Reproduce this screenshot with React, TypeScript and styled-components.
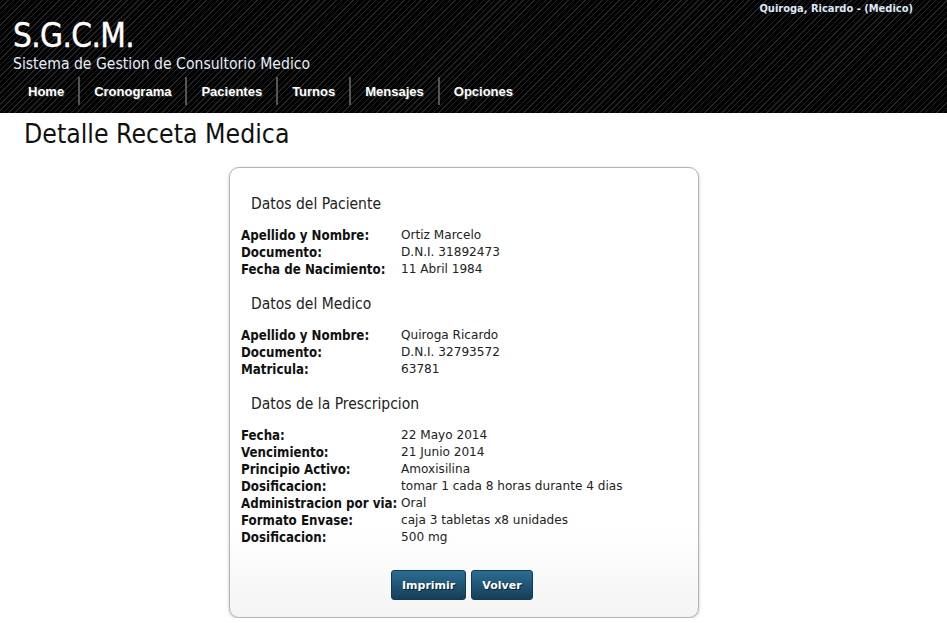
import React from "react";
import styled, { createGlobalStyle } from "styled-components";

const Global = createGlobalStyle`
  html, body { margin: 0; padding: 0; background: #fff; }
  body { font-family: "DejaVu Sans", Verdana, sans-serif; color: #222; }
`;

const Header = styled.header`
  height: 113px;
  background-color: #000;
  background-image: repeating-linear-gradient(-45deg, #000 0 3px, #242424 3px 4px);
  color: #fff;
  position: relative;
  display: flex;
  flex-direction: column;
  padding: 18px 0 0 13px;
  box-sizing: border-box;
`;

const UserName = styled.div`
  position: absolute;
  top: 2px;
  right: 34px;
  font-family: "DejaVu Sans Condensed", "DejaVu Sans", sans-serif;
  font-weight: bold;
  font-size: 11px;
  color: #dce8f6;
`;

const Logo = styled.div`
  font-family: "DejaVu Sans Condensed", "DejaVu Sans", Verdana, sans-serif;
  font-size: 33px;
  line-height: 36px;
  letter-spacing: -0.6px;
  -webkit-text-stroke: 0.4px #fff;
`;

const Subtitle = styled.div`
  font-family: "DejaVu Sans Condensed", "DejaVu Sans", sans-serif;
  font-size: 15.6px;
  line-height: 20px;
  color: #e6eefa;
`;

const Nav = styled.nav`
  display: flex;
  margin: 3px 0 0 1px;
  height: 28px;
`;

const NavItem = styled.a<{ $last?: boolean }>`
  display: flex;
  align-items: center;
  padding: 0 14px;
  font-family: "Liberation Sans", Arial, sans-serif;
  font-weight: bold;
  font-size: 13px;
  color: #fff;
  text-shadow: 1px 1px 0 #333;
  border-right: ${(p) => (p.$last ? "none" : "2px solid #555")};
  cursor: pointer;
`;

const PageTitle = styled.h1`
  margin: 6px 0 0 24px;
  font-family: "DejaVu Sans Condensed", "DejaVu Sans", sans-serif;
  font-weight: normal;
  font-size: 26.4px;
  line-height: 30px;
  color: #111;
`;

const Main = styled.main`
  display: flex;
  justify-content: flex-start;
  padding: 0 0 0 229px;
  margin-top: 18px;
`;

const Card = styled.section`
  width: 470px;
  box-sizing: border-box;
  border: 1px solid #b4b4b4;
  border-radius: 10px;
  background: linear-gradient(#fff 80%, #f4f4f4);
  box-shadow: 0 1px 3px rgba(0, 0, 0, 0.25);
  padding: 10px 11px 17px;
`;

const Heading = styled.h2`
  margin: 16px 0 13px 10px;
  font-family: "DejaVu Sans Condensed", "DejaVu Sans", sans-serif;
  font-weight: normal;
  font-size: 15.5px;
  line-height: 20px;
  color: #222;
`;

const Row = styled.div`
  display: grid;
  grid-template-columns: 160px 1fr;
  height: 17px;
  line-height: 17px;
  font-size: 12.1px;
  white-space: nowrap;
`;

const Label = styled.span`
  font-family: "DejaVu Sans Condensed", "DejaVu Sans", sans-serif;
  font-weight: bold;
  font-size: 13.2px;
  color: #111;
`;

const Value = styled.span`
  color: #222;
`;

const Buttons = styled.div`
  display: flex;
  gap: 5px;
  margin: 24px 0 0 150px;
`;

const Button = styled.button`
  height: 30px;
  padding: 0 10px;
  border: 1px solid #123a55;
  border-radius: 3px;
  background: linear-gradient(#2b6d92, #163e58);
  color: #fff;
  font-family: "DejaVu Sans", Verdana, sans-serif;
  font-weight: bold;
  font-size: 11px;
  text-shadow: 1px 1px 0 #0b2233;
  cursor: pointer;
`;

type Pair = [string, string];

const sections: { title: string; rows: Pair[] }[] = [
  {
    title: "Datos del Paciente",
    rows: [
      ["Apellido y Nombre:", "Ortiz Marcelo"],
      ["Documento:", "D.N.I. 31892473"],
      ["Fecha de Nacimiento:", "11 Abril 1984"],
    ],
  },
  {
    title: "Datos del Medico",
    rows: [
      ["Apellido y Nombre:", "Quiroga Ricardo"],
      ["Documento:", "D.N.I. 32793572"],
      ["Matricula:", "63781"],
    ],
  },
  {
    title: "Datos de la Prescripcion",
    rows: [
      ["Fecha:", "22 Mayo 2014"],
      ["Vencimiento:", "21 Junio 2014"],
      ["Principio Activo:", "Amoxisilina"],
      ["Dosificacion:", "tomar 1 cada 8 horas durante 4 dias"],
      ["Administracion por via:", "Oral"],
      ["Formato Envase:", "caja 3 tabletas x8 unidades"],
      ["Dosificacion:", "500 mg"],
    ],
  },
];

const navItems = ["Home", "Cronograma", "Pacientes", "Turnos", "Mensajes", "Opciones"];

export default function App() {
  return (
    <>
      <Global />
      <Header>
        <UserName>Quiroga, Ricardo - (Medico)</UserName>
        <Logo>S.G.C.M.</Logo>
        <Subtitle>Sistema de Gestion de Consultorio Medico</Subtitle>
        <Nav>
          {navItems.map((n, i) => (
            <NavItem key={n} $last={i === navItems.length - 1}>
              {n}
            </NavItem>
          ))}
        </Nav>
      </Header>
      <PageTitle>Detalle Receta Medica</PageTitle>
      <Main>
        <Card>
          {sections.map((s) => (
            <div key={s.title}>
              <Heading>{s.title}</Heading>
              {s.rows.map(([l, v], i) => (
                <Row key={i}>
                  <Label>{l}</Label>
                  <Value>{v}</Value>
                </Row>
              ))}
            </div>
          ))}
          <Buttons>
            <Button>Imprimir</Button>
            <Button>Volver</Button>
          </Buttons>
        </Card>
      </Main>
    </>
  );
}
